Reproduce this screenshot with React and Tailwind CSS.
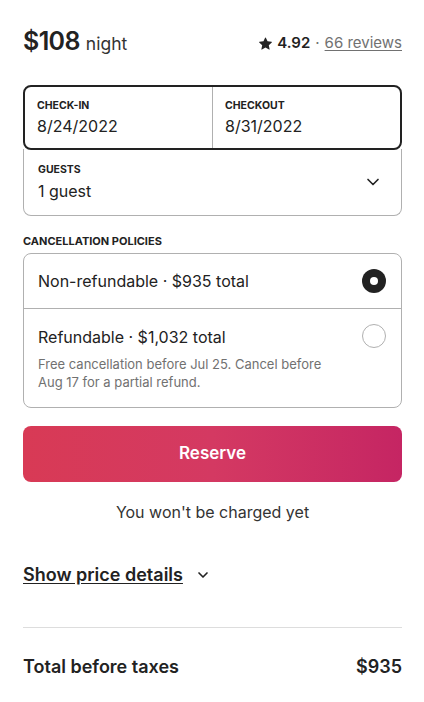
import { ChevronDown } from 'lucide-react';

export default function App() {
  return (
    <div className="min-h-screen bg-white pl-[23px] pr-[22px] text-[#222222]" style={{ fontFamily: 'Inter, "Noto Sans", sans-serif' }}>
      {/* Header */}
      <div className="flex items-baseline justify-between pt-[23px]">
        <div className="flex items-baseline gap-[6px]">
          <span className="text-[25px] font-semibold tracking-tight">$108</span>
          <span className="text-[17.5px] text-[#333]">night</span>
        </div>
        <div className="flex items-center gap-[5px] text-[15px]">
          <svg viewBox="0 0 32 32" className="h-[13px] w-[13px] fill-[#222]">
            <path d="M15.1 1.58l-4.13 8.88-9.86 1.27a1 1 0 0 0-.54 1.74l7.3 6.57-1.970 9.85a1 1 0 0 0 1.48 1.06l8.62-5 8.63 5a1 1 0 0 0 1.48-1.06l-1.97-9.85 7.3-6.57a1 1 0 0 0-.55-1.73l-9.86-1.28-4.12-8.88a1 1 0 0 0-1.82 0z" />
          </svg>
          <span className="font-semibold">4.92</span>
          <span className="text-[#717171]">·</span>
          <span className="text-[#717171] underline underline-offset-2">66 reviews</span>
        </div>
      </div>

      {/* Dates and guests */}
      <div className="mt-[24px]">
        <div className="flex h-[65px] rounded-lg border-2 border-[#222]">
          <div className="flex-1 border-r border-[#b0b0b0] px-3 pt-[11px]">
            <div className="text-[10.5px] font-bold uppercase">Check-in</div>
            <div className="mt-[1px] text-[16px]">8/24/2022</div>
          </div>
          <div className="flex-1 px-3 pt-[11px]">
            <div className="text-[10.5px] font-bold uppercase">Checkout</div>
            <div className="mt-[1px] text-[16px]">8/31/2022</div>
          </div>
        </div>
        <div className="-mt-px flex h-[67px] items-center justify-between rounded-b-lg border border-t-0 border-[#b0b0b0] pl-[14px] pr-[18px]">
          <div className="pt-[2px]">
            <div className="text-[10.5px] font-bold uppercase">Guests</div>
            <div className="mt-[1px] text-[16px]">1 guest</div>
          </div>
          <ChevronDown className="h-5 w-5" strokeWidth={2} />
        </div>
      </div>

      {/* Cancellation policies */}
      <div className="mt-[17px] text-[11px] font-bold uppercase">Cancellation policies</div>
      <div className="mt-[4px] rounded-lg border border-[#b0b0b0]">
        <div className="flex h-[55px] items-center justify-between border-b border-[#b0b0b0] pl-[14px] pr-[15px]">
          <span className="text-[16px]">Non-refundable · $935 total</span>
          <span className="flex h-6 w-6 items-center justify-center rounded-full bg-[#222]">
            <span className="h-2 w-2 rounded-full bg-white" />
          </span>
        </div>
        <div className="flex justify-between pl-[14px] pr-[15px] pt-[16px] pb-[16px]">
          <div>
            <div className="text-[16px]">Refundable · $1,032 total</div>
            <div className="mt-[6px] w-[300px] text-[13px] leading-[18px] text-[#717171]">
              Free cancellation before Jul 25. Cancel before Aug 17 for a partial refund.
            </div>
          </div>
          <span className="mt-[-1px] h-6 w-6 shrink-0 rounded-full border border-[#b0b0b0]" />
        </div>
      </div>

      {/* Reserve */}
      <button className="mt-[18px] flex h-[56px] w-full items-center justify-center rounded-lg bg-gradient-to-r from-[#d83a55] via-[#d43962] to-[#c52563] text-[17px] font-semibold text-white">
        Reserve
      </button>
      <div className="mt-[18px] text-center text-[16px] text-[#333]">You won't be charged yet</div>

      {/* Price details */}
      <div className="mt-[37px] flex items-center gap-3">
        <span className="text-[18px] font-semibold underline underline-offset-2">Show price details</span>
        <ChevronDown className="h-4 w-4" strokeWidth={2.5} />
      </div>

      <div className="mt-[39px] border-t border-[#dddddd]" />

      <div className="mt-[25px] flex items-center justify-between text-[18px] font-semibold">
        <span>Total before taxes</span>
        <span>$935</span>
      </div>
    </div>
  );
}
